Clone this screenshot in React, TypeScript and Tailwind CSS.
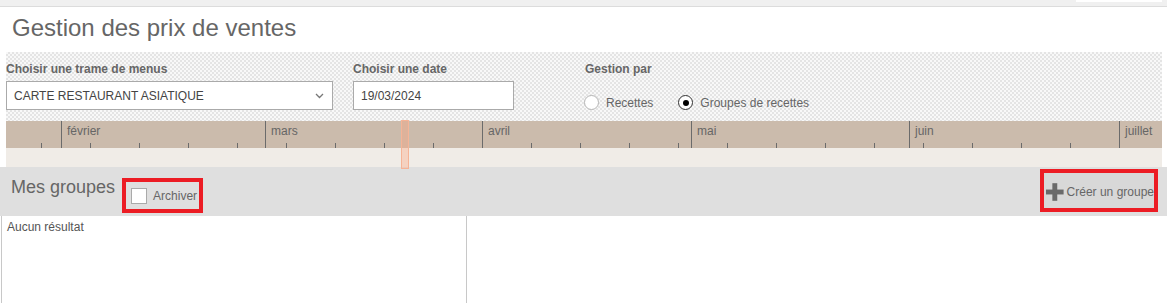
import React from "react";

const months = [
  { name: "février", x: 61 },
  { name: "mars", x: 265 },
  { name: "avril", x: 482 },
  { name: "mai", x: 691 },
  { name: "juin", x: 909 },
  { name: "juillet", x: 1119 },
];

const ticks: number[] = [];
for (let x = 41; x < 1160; x += 49) {
  if (!months.some((m) => Math.abs(m.x - x) < 3)) ticks.push(x);
}

function Radio({ checked, label }: { checked?: boolean; label: string }) {
  return (
    <div className="flex items-center">
      <div
        className={
          checked
            ? "w-[15px] h-[15px] rounded-full bg-white border border-[#333] flex items-center justify-center"
            : "w-[15px] h-[15px] rounded-full bg-white border border-[#b5b5b5]"
        }
      >
        {checked ? <div className="w-[6px] h-[6px] rounded-full bg-black" /> : null}
      </div>
      <span className="ml-[7px] text-[12px] leading-[14px] text-[#666]">{label}</span>
    </div>
  );
}

export default function App() {
  return (
    <div className="w-[1167px] h-[303px] bg-white overflow-hidden font-['Liberation_Sans',Arial,sans-serif] text-[#666]">
      <div className="h-[7px] bg-[#f0f0f0] border-b border-[#dcdcdc] flex justify-end pr-[5px]">
        <div className="w-[86px] h-[2px] bg-white" />
      </div>
      <div className="h-[45px] pl-[12px] pt-[9px] text-[24px] leading-[24px] text-[#666]">
        Gestion des prix de ventes
      </div>

      <div className="relative mx-[6px] w-[1156px]">
        <div className="h-[69px] pt-[10px] flex bg-[repeating-conic-gradient(#e4e4e4_0_25%,#f8f8f8_0_50%)] bg-[length:4px_4px]">
          <div className="w-[347px]">
            <div className="h-[14px] text-[12px] leading-[14px] font-bold text-[#666]">
              Choisir une trame de menus
            </div>
            <div className="mt-[5px] w-[327px] h-[29px] bg-white border border-[#aaa] flex items-center justify-between pl-[7px] pr-[8px]">
              <span className="text-[12px] text-[#444]">CARTE RESTAURANT ASIATIQUE</span>
              <svg width="9" height="6" viewBox="0 0 9 6">
                <path d="M1 1 L4.5 4.5 L8 1" fill="none" stroke="#777" strokeWidth="1.3" />
              </svg>
            </div>
          </div>
          <div className="w-[231px]">
            <div className="h-[14px] text-[12px] leading-[14px] font-bold text-[#666]">
              Choisir une date
            </div>
            <div className="mt-[5px] w-[161px] h-[29px] bg-white border border-[#aaa] flex items-center pl-[7px]">
              <span className="text-[12px] text-[#444]">19/03/2024</span>
            </div>
          </div>
          <div>
            <div className="h-[14px] pl-[1px] text-[12px] leading-[14px] font-bold text-[#666]">
              Gestion par
            </div>
            <div className="mt-[19px] flex items-center gap-[25px]">
              <Radio label="Recettes" />
              <Radio checked label="Groupes de recettes" />
            </div>
          </div>
        </div>

        <div className="relative h-[27px] bg-[#cbbbac]">
          {months.map((m) => (
            <div
              key={m.name}
              className="absolute top-0 h-[27px] border-l border-[#6b6b6b] pl-[5px] pt-[3px] text-[12px] leading-[14px] text-[#666]"
              style={{ left: m.x - 6 }}
            >
              {m.name}
            </div>
          ))}
          {ticks.map((t) => (
            <div
              key={t}
              className="absolute bottom-0 h-[5px] w-px bg-[#6b6b6b]"
              style={{ left: t - 6 }}
            />
          ))}
        </div>
        <div className="h-[19px] bg-[#f0ece7]" />

        <div className="absolute z-10 left-[395px] top-[68px] w-[8px] h-[49px] bg-[#ffa27a]/35 border border-[#f6b396]" />
      </div>

      <div className="h-[49px] bg-[#dfdfdf] flex justify-between items-start">
        <div className="flex items-start">
          <div className="pl-[11px] pt-[10px] text-[18px] leading-[20px] text-[#666]">Mes groupes</div>
          <div className="ml-[7px] mt-[11px] h-[35px] w-[81px] border-[4px] border-[#ec1c24] flex items-center pl-[5px]">
            <div className="w-[16px] h-[16px] bg-white border border-[#aaa]" />
            <span className="ml-[6px] text-[12px] text-[#666]">Archiver</span>
          </div>
        </div>
        <div className="mt-[2px] mr-[9px] h-[43px] w-[118px] border-[4px] border-[#ec1c24] bg-[#d8d8d8] flex items-center pl-[2px] pt-[2px] whitespace-nowrap">
          <svg width="18" height="18" viewBox="0 0 18 18">
            <rect x="6.5" y="0" width="5" height="18" fill="#6a6a6a" />
            <rect x="0" y="6.5" width="18" height="5" fill="#6a6a6a" />
          </svg>
          <span className="ml-[3px] text-[12px] text-[#666]">Créer un groupe</span>
        </div>
      </div>

      <div className="flex h-[87px] ml-[1px]">
        <div className="w-[466px] border-l border-r border-[#c8c8c8] pl-[5px] pt-[4px] text-[12px] leading-[14px] text-[#555]">
          Aucun résultat
        </div>
      </div>
    </div>
  );
}
